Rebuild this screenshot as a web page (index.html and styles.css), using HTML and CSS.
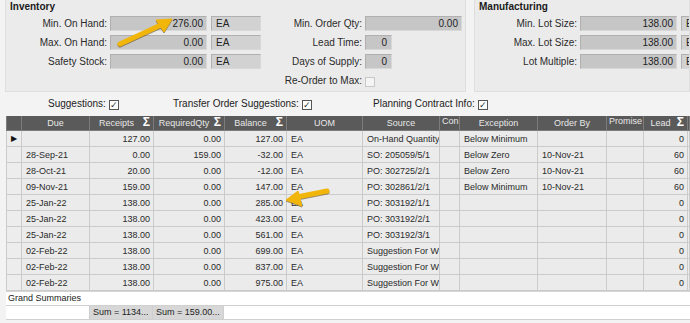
FILE: index.html
```html
<!DOCTYPE html>
<html lang="en">
<head>
    <meta charset="UTF-8">
    <title>Part Planning</title>
    <link rel="stylesheet" href="styles.css">
</head>
<body>
<div class="top">
    <section class="panel inv">
        <h2>Inventory</h2>
        <div class="panel-body">
            <div class="col">
                <div class="field"><label>Min. On Hand:</label><span class="box num">276.00</span><span class="box uom">EA</span></div>
                <div class="field"><label>Max. On Hand:</label><span class="box num">0.00</span><span class="box uom">EA</span></div>
                <div class="field"><label>Safety Stock:</label><span class="box num">0.00</span><span class="box uom">EA</span></div>
            </div>
            <div class="col">
                <div class="field"><label>Min. Order Qty:</label><span class="box num">0.00</span></div>
                <div class="field"><label>Lead Time:</label><span class="box num short">0</span></div>
                <div class="field"><label>Days of Supply:</label><span class="box num short">0</span></div>
                <div class="field"><label>Re-Order to Max:</label><span class="chk off"></span></div>
            </div>
        </div>
    </section>
    <section class="panel mfg">
        <h2>Manufacturing</h2>
        <div class="panel-body">
            <div class="col">
                <div class="field"><label>Min. Lot Size:</label><span class="box num">138.00</span><span class="box uom">EA</span></div>
                <div class="field"><label>Max. Lot Size:</label><span class="box num">138.00</span><span class="box uom">EA</span></div>
                <div class="field"><label>Lot Multiple:</label><span class="box num">138.00</span><span class="box uom">EA</span></div>
            </div>
        </div>
    </section>
</div>

<div class="checks">
    <div class="opt o1">Suggestions: <span class="chk on">&#10003;</span></div>
    <div class="opt o2">Transfer Order Suggestions: <span class="chk on">&#10003;</span></div>
    <div class="opt">Planning Contract Info: <span class="chk on">&#10003;</span></div>
</div>

<div class="grid">
    <table>
        <colgroup>
            <col style="width:15px"><col style="width:68px"><col style="width:64px"><col style="width:71px">
            <col style="width:62px"><col style="width:76px"><col style="width:77px"><col style="width:20px">
            <col style="width:78px"><col style="width:69px"><col style="width:37px"><col style="width:44px"><col>
        </colgroup>
        <thead>
            <tr>
                <th></th><th>Due</th>
                <th class="sig">Receipts<i>&Sigma;</i></th>
                <th class="sig">RequiredQty<i>&Sigma;</i></th>
                <th class="sig">Balance<i>&Sigma;</i></th>
                <th>UOM</th><th>Source</th><th class="top-al">Con</th><th>Exception</th><th>Order By</th>
                <th class="top-al">Promise</th><th class="sig">Lead<i>&Sigma;</i></th><th></th>
            </tr>
        </thead>
        <tbody>
            <tr class="cur"><td class="ind">&#9654;</td><td></td><td class="n">127.00</td><td class="n">0.00</td><td class="n">127.00</td><td>EA</td><td>On-Hand Quantity</td><td></td><td>Below Minimum</td><td></td><td></td><td class="n">0</td><td></td></tr>
            <tr><td class="ind"></td><td>28-Sep-21</td><td class="n">0.00</td><td class="n">159.00</td><td class="n">-32.00</td><td>EA</td><td>SO: 205059/5/1</td><td></td><td>Below Zero</td><td>10-Nov-21</td><td></td><td class="n">60</td><td></td></tr>
            <tr><td class="ind"></td><td>28-Oct-21</td><td class="n">20.00</td><td class="n">0.00</td><td class="n">-12.00</td><td>EA</td><td>PO: 302725/2/1</td><td></td><td>Below Zero</td><td>10-Nov-21</td><td></td><td class="n">60</td><td></td></tr>
            <tr><td class="ind"></td><td>09-Nov-21</td><td class="n">159.00</td><td class="n">0.00</td><td class="n">147.00</td><td>EA</td><td>PO: 302861/2/1</td><td></td><td>Below Minimum</td><td>10-Nov-21</td><td></td><td class="n">60</td><td></td></tr>
            <tr><td class="ind"></td><td>25-Jan-22</td><td class="n">138.00</td><td class="n">0.00</td><td class="n">285.00</td><td>EA</td><td>PO: 303192/1/1</td><td></td><td></td><td></td><td></td><td class="n">0</td><td></td></tr>
            <tr><td class="ind"></td><td>25-Jan-22</td><td class="n">138.00</td><td class="n">0.00</td><td class="n">423.00</td><td>EA</td><td>PO: 303192/2/1</td><td></td><td></td><td></td><td></td><td class="n">0</td><td></td></tr>
            <tr><td class="ind"></td><td>25-Jan-22</td><td class="n">138.00</td><td class="n">0.00</td><td class="n">561.00</td><td>EA</td><td>PO: 303192/3/1</td><td></td><td></td><td></td><td></td><td class="n">0</td><td></td></tr>
            <tr><td class="ind"></td><td>02-Feb-22</td><td class="n">138.00</td><td class="n">0.00</td><td class="n">699.00</td><td>EA</td><td>Suggestion For W</td><td></td><td></td><td></td><td></td><td class="n">0</td><td></td></tr>
            <tr><td class="ind"></td><td>02-Feb-22</td><td class="n">138.00</td><td class="n">0.00</td><td class="n">837.00</td><td>EA</td><td>Suggestion For W</td><td></td><td></td><td></td><td></td><td class="n">0</td><td></td></tr>
            <tr><td class="ind"></td><td>02-Feb-22</td><td class="n">138.00</td><td class="n">0.00</td><td class="n">975.00</td><td>EA</td><td>Suggestion For W</td><td></td><td></td><td></td><td></td><td class="n">0</td><td></td></tr>
        </tbody>
    </table>
    <div class="summaries">
        <div class="sum-title">Grand Summaries</div>
        <div class="sum-row">
            <span class="sum-cell blank"></span>
            <span class="sum-cell val">Sum = 1134...</span>
            <span class="sum-cell val v2">Sum = 159.00...</span>
            <span class="sum-cell rest"></span>
        </div>
    </div>
</div>

<svg class="arrows" width="690" height="323" viewBox="0 0 690 323">
    <g class="arrow">
        <line x1="120" y1="44" x2="161" y2="25"/>
        <polygon points="172,19 156,20 164,32"/>
    </g>
    <g class="arrow">
        <line x1="327" y1="191" x2="297" y2="197"/>
        <polygon points="286,200 298,191 302,206"/>
    </g>
</svg>
</body>
</html>
```

FILE: styles.css
```css
body {
    margin: 0;
    width: 690px;
    height: 323px;
    overflow: hidden;
    background: #f3f3f3;
    font-family: "Liberation Sans", Arial, sans-serif;
    font-size: 10px;
    color: #222;
    position: relative;
}

.top {
    display: flex;
    height: 92px;
    padding-left: 5px;
    gap: 8px;
}

.panel {
    background: #ebebeb;
    border: 1px solid #dedede;
    border-top: none;
    overflow: hidden;
}

.inv { width: 459px; }
.mfg { flex: 1; }

.panel h2 {
    margin: 0;
    height: 16px;
    line-height: 14px;
    padding-left: 4px;
    font-size: 10px;
    font-weight: bold;
    color: #1a1a1a;
}

.panel-body {
    display: flex;
}

.col {
    display: flex;
    flex-direction: column;
    gap: 4px;
}

.field {
    display: flex;
    align-items: center;
    height: 15px;
}

.field label {
    width: 101px;
    text-align: right;
    margin-right: 3px;
    color: #2a2a2a;
    white-space: nowrap;
}

.mfg .field label { width: 102px; }

.box {
    box-sizing: border-box;
    height: 15px;
    line-height: 13px;
    background: #c6c6c6;
    border: 1px solid #b0b0b0;
    border-right-color: #d8d8d8;
    border-bottom-color: #d8d8d8;
    white-space: nowrap;
}

.num {
    width: 97px;
    text-align: right;
    padding-right: 3px;
}

.num.short { width: 27px; padding-right: 4px; }

.uom {
    width: 50px;
    margin-left: 4px;
    padding-left: 4px;
    background: #d2d2d2;
}

.mfg .uom { flex-shrink: 0; }

.chk {
    display: inline-block;
    box-sizing: border-box;
    width: 10px;
    height: 10px;
    border: 1px solid #555;
    background: #fff;
    font-size: 9px;
    line-height: 8px;
    text-align: center;
    vertical-align: -1px;
    color: #333;
}

.chk.off {
    border-color: #c8c8c8;
    background: #f4f4f4;
    margin-top: 2px;
}

.checks {
    display: flex;
    align-items: center;
    height: 24px;
    padding-left: 48px;
}

.opt { white-space: nowrap; }
.o1 { width: 125px; }
.o2 { width: 200px; }

.grid {
    margin-left: 6px;
    background: #fff;
}

table {
    border-collapse: collapse;
    table-layout: fixed;
    width: 684px;
    font-size: 9px;
}

th {
    height: 14px;
    padding: 0 3px;
    background: #5a5a5a;
    color: #e8e8e8;
    font-weight: normal;
    border: 1px solid #7c7c7c;
    border-top: none;
    white-space: nowrap;
    overflow: hidden;
    text-align: center;
}

th.top-al { vertical-align: top; text-align: left; padding-left: 2px; }

th.sig { padding: 0 12px 0 2px; position: relative; }

th.sig i {
    position: absolute;
    right: 3px;
    top: -1px;
    font-style: normal;
    font-weight: bold;
    font-size: 12px;
    color: #fff;
}

td {
    height: 15px;
    padding: 0 4px;
    background: #ebebeb;
    border: 1px solid #cbcbcb;
    white-space: nowrap;
    overflow: hidden;
    color: #2a2a2a;
}

td.n { text-align: right; padding-right: 3px; }

td.ind {
    padding: 0;
    text-align: center;
    font-size: 8px;
    color: #111;
    background: #ededed;
}

tr.cur td { border-top: 1px solid #555; }
tr.cur td:nth-child(2) { border-left: 1px solid #555; }

.summaries {
    border-top: 1px solid #d4d4d4;
}

.sum-title {
    height: 13px;
    line-height: 13px;
    padding-left: 2px;
    font-size: 9px;
    background: #fff;
}

.sum-row {
    display: flex;
    height: 13px;
    border-top: 1px solid #d0d0d0;
    border-bottom: 1px solid #d0d0d0;
    font-size: 9px;
}

.sum-cell {
    box-sizing: border-box;
    line-height: 12px;
    border-right: 1px solid #cfcfcf;
    white-space: nowrap;
}

.blank { width: 84px; background: #fff; }
.val { width: 63px; background: #d7d7d7; padding-left: 3px; }
.val.v2 { width: 71px; }
.rest { flex: 1; background: #fff; border-right: none; }

.arrows {
    position: absolute;
    left: 0;
    top: 0;
    pointer-events: none;
}

.arrow line {
    stroke: #f2b50a;
    stroke-width: 5;
    stroke-linecap: round;
}

.arrow polygon {
    fill: #f2b50a;
    stroke: #f2b50a;
    stroke-width: 1;
    stroke-linejoin: round;
}

.arrow {
    filter: drop-shadow(0 1px 0.6px rgba(90, 60, 0, 0.55));
}
```
